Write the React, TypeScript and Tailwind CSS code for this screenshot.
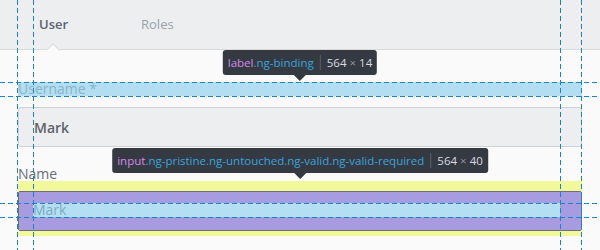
const font = { fontFamily: '"Open Sans", "Liberation Sans", sans-serif' };

function Tooltip({
  top,
  tag,
  classes,
  size,
}: {
  top: string;
  tag: string;
  classes: string;
  size: [number, number];
}) {
  return (
    <div className={`absolute left-[300px] ${top} -translate-x-1/2 flex flex-col items-center`}>
      <div className="h-[25px] flex items-center px-[5px] rounded-[3px] bg-[#343942] text-[11.5px] whitespace-nowrap">
        <span className="text-[#d48be6]">{tag}</span>
        <span className="text-[#3aa6dd]">{classes}</span>
        <span className="mx-[6px] w-px h-[15px] bg-[#5b616a]" />
        <span className="text-[#d8dbe0]">
          {size[0]} <span className="text-[#8d939c]">×</span> {size[1]}
        </span>
      </div>
      <div className="w-0 h-0 border-x-[6px] border-x-transparent border-t-[6px] border-t-[#343942]" />
    </div>
  );
}

function Guides() {
  const xs = [17.5, 33.5, 560.5, 581.5];
  const ys = [82.5, 96.5, 203.5, 217.5];
  return (
    <svg className="absolute inset-0 pointer-events-none" width="600" height="250">
      {xs.map(x => (
        <line key={`x${x}`} x1={x} x2={x} y1={0} y2={250} stroke="#1784cf" strokeWidth={1} strokeDasharray="5 3" />
      ))}
      {ys.map(y => (
        <line key={`y${y}`} x1={0} x2={600} y1={y} y2={y} stroke="#1784cf" strokeWidth={1} strokeDasharray="5 3" />
      ))}
    </svg>
  );
}

export default function App() {
  return (
    <div className="relative w-[600px] h-[250px] overflow-hidden bg-[#fafafa]" style={font}>
      {/* tabs */}
      <div className="h-[50px] flex items-center bg-[#edeef0] border-b border-[#d9dadc] text-[13px]">
        <div className="relative ml-[39px] w-[102px] h-full flex items-center font-semibold text-[#5a6372]">
          User
          <span className="absolute left-[9px] bottom-[-6px] w-[10px] h-[10px] rotate-45 bg-[#fafafa] border-l border-t border-[#d9dadc]" />
        </div>
        <div className="text-[#9aa2ad]">Roles</div>
      </div>

      {/* form */}
      <div className="px-[18px]">
        <label className="block mt-[32px] h-[14px] leading-[14px] text-[14px] text-[#6b6e75]">Username *</label>
        <div className="mt-[11px] h-[40px] flex items-center pl-[15px] rounded-[3px] border border-[#cfd1d4] bg-[#edeef0] text-[14px] font-semibold text-[#5f6368]">
          Mark
        </div>
        <label className="block mt-[20px] h-[14px] leading-[14px] text-[14px] text-[#6b6e75]">Name</label>
        <div className="mt-[10px] h-[40px] py-[11px] pl-[14px] rounded-[3px] border border-[#cccccc] bg-white text-[14px] leading-[14px] text-[#4a4a4a]">
          Mark
        </div>
      </div>

      {/* inspector highlights */}
      <div className="absolute left-[18px] top-[82px] w-[564px] h-[14px] bg-[rgba(148,210,237,0.7)]" />
      <div className="absolute left-[18px] top-[181px] w-[564px] border-t-[10px] border-b-[5px] border-[#f1f99b]">
        <div className="h-[40px] rounded-[2px] border border-[#6f6f78] overflow-hidden">
          <div className="h-full border-t-[11px] border-b-[13px] border-l-[14px] border-r-[21px] border-[#a89ce0]">
            <div className="h-[14px] bg-[rgba(148,210,237,0.7)]" />
          </div>
        </div>
      </div>

      <Guides />

      <Tooltip top="top-[50px]" tag="label" classes=".ng-binding" size={[564, 14]} />
      <Tooltip
        top="top-[148px]"
        tag="input"
        classes=".ng-pristine.ng-untouched.ng-valid.ng-valid-required"
        size={[564, 40]}
      />
    </div>
  );
}
